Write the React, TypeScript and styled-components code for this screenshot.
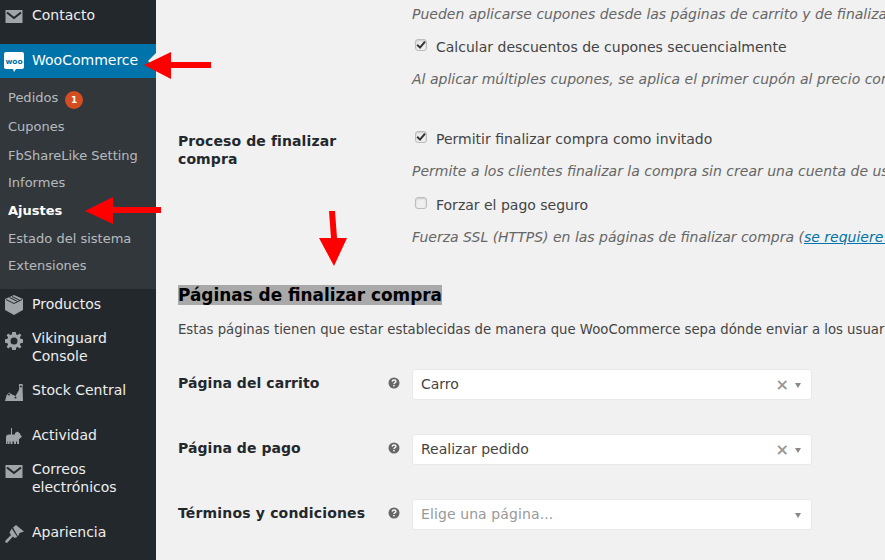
import React from "react";
import styled, { createGlobalStyle } from "styled-components";

const Global = createGlobalStyle`
  html, body { margin: 0; padding: 0; height: 100%; overflow: hidden; background: #f1f1f1; }
  body { font-family: "DejaVu Sans", sans-serif; }
`;

const Page = styled.div`
  position: relative;
  display: flex;
  width: 885px;
  height: 560px;
  overflow: hidden;
`;

const Sidebar = styled.nav`
  flex: 0 0 156px;
  background: #23282d;
  display: flex;
  flex-direction: column;
  margin-top: -2px;
`;

const MenuItem = styled.div<{ $active?: boolean; $gap?: number; $h?: number; $pad?: number }>`
  position: relative;
  display: flex;
  align-items: flex-start;
  height: ${(p) => p.$h ?? 34}px;
  flex: none;
  box-sizing: border-box;
  padding-top: ${(p) => p.$pad ?? 8}px;
  margin-top: ${(p) => p.$gap ?? 0}px;
  background: ${(p) => (p.$active ? "#0073aa" : "transparent")};
  color: ${(p) => (p.$active ? "#fff" : "#eee")};
  font-size: 14px;
  line-height: 18px;
`;

const Notch = styled.span`
  position: absolute;
  right: 0;
  top: 9px;
  width: 0;
  height: 0;
  border: 8px solid transparent;
  border-right-color: #f1f1f1;
`;

const IconSlot = styled.span<{ $dy: number }>`
  flex: 0 0 32px;
  display: flex;
  justify-content: center;
  padding-right: 4px;
  box-sizing: border-box;
  height: 18px;
  svg { display: block; margin-top: ${(p) => p.$dy}px; }
`;

const Submenu = styled.div`
  background: #32373c;
  height: 211px;
  flex: none;
  display: flex;
  flex-direction: column;
  padding: 6px 0 0 8px;
  box-sizing: border-box;
`;

const SubItem = styled.div<{ $current?: boolean; $h: number }>`
  height: ${(p) => p.$h}px;
  flex: none;
  display: flex;
  align-items: center;
  font-size: 13px;
  line-height: 18px;
  white-space: nowrap;
  color: ${(p) => (p.$current ? "#fff" : "rgba(240,245,250,.7)")};
  font-weight: ${(p) => (p.$current ? 700 : 400)};
`;

const Badge = styled.span`
  display: inline-flex;
  align-items: center;
  justify-content: center;
  width: 18px;
  height: 18px;
  border-radius: 50%;
  background: #d54e21;
  color: #fff;
  font-size: 9px;
  font-weight: 700;
  margin: 4px 0 0 7px;
`;

const Main = styled.main`
  flex: 1;
  min-width: 0;
  padding-left: 22px;
  overflow: hidden;
  color: #444;
  font-size: 14px;
  line-height: 20px;
`;

const OptionRow = styled.div<{ $mt: number }>`
  display: flex;
  margin-top: ${(p) => p.$mt}px;
`;

const RowLabel = styled.div`
  flex: 0 0 234px;
  font-weight: 700;
  color: #23282d;
  line-height: 18px;
  margin-top: 3px;
  padding-right: 60px;
  box-sizing: border-box;
  letter-spacing: 0.1px;
`;

const OptionColumn = styled.div<{ $indent?: boolean }>`
  display: flex;
  flex-direction: column;
  min-width: 0;
  flex: 1;
  margin-left: ${(p) => (p.$indent ? 234 : 0)}px;
`;

const Description = styled.p<{ $mt?: number }>`
  margin: ${(p) => p.$mt ?? 0}px 0 0;
  font-style: italic;
  color: #666;
  white-space: nowrap;
  font-size: 14px;
  line-height: 20px;
`;

const CheckLine = styled.div<{ $mt?: number }>`
  display: flex;
  align-items: center;
  height: 20px;
  margin-top: ${(p) => p.$mt ?? 0}px;
  white-space: nowrap;
  color: #444;
`;

const Check = styled.span`
  flex: none;
  width: 10px;
  height: 10px;
  margin: 0 9px 0 3px;
  border: 1px solid #bcbcbc;
  border-radius: 3px;
  background: #efefef;
  box-shadow: inset 0 1px 2px rgba(0,0,0,.15);
  position: relative;
  top: -2px;
  svg { display: block; position: absolute; left: -1px; top: -1px; }
`;

const DocLink = styled.span`
  color: #0073aa;
  text-decoration: underline;
`;

const SectionHeading = styled.h2`
  margin: 38px 0 0;
  font-size: 16.9px;
  line-height: 20px;
  font-weight: 700;
  color: #000;
  white-space: nowrap;
  span { background: #a9a9a9; }
`;

const Intro = styled.p`
  margin: 15px 0 0;
  font-size: 13.26px;
  line-height: 20px;
  color: #444;
  white-space: nowrap;
`;

const FieldRow = styled.div<{ $mt: number }>`
  display: flex;
  align-items: flex-start;
  margin-top: ${(p) => p.$mt}px;
`;

const FieldLabel = styled.div<{ $track: number }>`
  flex: 0 0 208px;
  font-weight: 700;
  color: #23282d;
  line-height: 18px;
  margin-top: 5px;
  white-space: nowrap;
  letter-spacing: ${(p) => p.$track}px;
`;

const Help = styled.span`
  flex: 0 0 26px;
  margin-top: 8px;
  svg { display: block; margin-left: 2px; }
`;

const SelectBox = styled.div`
  width: 400px;
  height: 31px;
  box-sizing: border-box;
  flex: none;
  background: #fff;
  border: 1px solid #e9e9e9;
  border-radius: 3px;
  display: flex;
  align-items: center;
  padding: 0 10px 0 8px;
`;

const SelectValue = styled.span<{ $placeholder?: boolean }>`
  flex: 1;
  color: ${(p) => (p.$placeholder ? "#999" : "#444")};
  position: relative;
  top: -1px;
  letter-spacing: ${(p) => (p.$placeholder ? 0.1 : 0)}px;
`;

const Clear = styled.span`
  font-size: 16px;
  line-height: 16px;
  font-weight: 700;
  color: #999;
  margin-right: 6px;
`;

const Caret = styled.span`
  width: 0;
  height: 0;
  border: 3px solid transparent;
  border-top: 5px solid #888;
  border-bottom: 0;
  position: relative;
  top: 1px;
`;

const ArrowsLayer = styled.svg`
  position: absolute;
  left: 0;
  top: 0;
  pointer-events: none;
`;

const gray = "#a0a5aa";
const dark = "#23282d";

const MailIcon = () => (
  <svg width="18" height="13" viewBox="0 0 18 13">
    <path fill={gray} d="M0.5 0H17.5V13H0.5Z" />
    <path fill="none" stroke={dark} strokeWidth="2" d="M2 2.5L9 8L16 2.5" />
  </svg>
);
const WooIcon = () => (
  <svg width="20" height="20" viewBox="0 0 20 20">
    <path fill="#fff" d="M2 0H18A2 2 0 0 1 20 2V15A2 2 0 0 1 18 17H12L10 20L9 17H2A2 2 0 0 1 0 15V2A2 2 0 0 1 2 0Z" />
    <text x="10" y="11.5" textAnchor="middle" fontFamily="'DejaVu Sans', sans-serif" fontSize="7.5" fontWeight="700" fill="#0073aa">woo</text>
  </svg>
);
const BoxIcon = () => (
  <svg width="18" height="20" viewBox="0 0 18 20">
    <path fill={gray} d="M9 0L18 4V15L9 20L0 15V4Z" />
    <path fill="none" stroke={dark} strokeWidth="1" d="M1 4.5L9 8.5L17 4.5M4.5 2.5L12.5 6.5M7 1.5L15 5.5" />
  </svg>
);
const GearIcon = () => (
  <svg width="18" height="18" viewBox="0 0 18 18">
    <path fill={gray} fillRule="evenodd" d="M7.2 0H10.8L11.2 2.5L12.7 3.1L14.8 1.6L16.4 3.2L14.9 5.3L15.5 6.8L18 7.2V10.8L15.5 11.2L14.9 12.7L16.4 14.8L14.8 16.4L12.7 14.9L11.2 15.5L10.8 18H7.2L6.8 15.5L5.3 14.9L3.2 16.4L1.6 14.8L3.1 12.7L2.5 11.2L0 10.8V7.2L2.5 6.8L3.1 5.3L1.6 3.2L3.2 1.6L5.3 3.1L6.8 2.5ZM9 5.5A3.5 3.5 0 1 0 9 12.5A3.5 3.5 0 1 0 9 5.5Z" />
  </svg>
);
const StockIcon = () => (
  <svg width="18" height="17" viewBox="0 0 18 17">
    <path fill={gray} d="M0 17L1.5 11.5L4 8.5L7 10.5L10.5 12L14 6L14.2 2.5A2 2 0 1 1 17.5 2.5L18 17Z" />
    <circle cx="15.8" cy="2.4" r="1" fill={dark} />
    <circle cx="4" cy="10.5" r="1" fill={dark} />
    <circle cx="10.5" cy="13.5" r="1" fill={dark} />
  </svg>
);
const PawIcon = () => (
  <svg width="16" height="16" viewBox="0 0 16 16">
    <path fill={gray} d="M0 16V9.5C0 7.5 1 6.5 3 6.5H5V0H6V6.5H9V5L11.5 3.5L14 5.5L14.5 7L16 8.5L14 10.5L13 11V16H11V13.5H10V16H8V13.5H6.5V16H4.5V13.5H3.5V16H1.5V13.5H1V16Z" />
  </svg>
);
const BrushIcon = () => (
  <svg width="19" height="18" viewBox="0 0 19 18">
    <path fill={gray} d="M8 2.5L11 0L19 6.5L14.5 8L13 11.5Z" />
    <path fill={gray} d="M6.8 3.5L12.3 12L9.5 13L8 11.5L2.5 17.5C1 18.3 -0.3 17 0.5 15.5L6 10L4.5 7.5Z" />
  </svg>
);
const HelpIcon = () => (
  <svg width="12" height="12" viewBox="0 0 12 12">
    <circle cx="6" cy="6" r="5.5" fill="#666" />
    <path fill="none" stroke="#f1f1f1" strokeWidth="1.5" d="M4.2 4.6C4.3 3.4 5 3 6 3C7.1 3 7.9 3.6 7.9 4.5C7.9 5.7 6 5.6 6 7" />
    <rect x="5.2" y="7.9" width="1.6" height="1.5" fill="#f1f1f1" />
  </svg>
);
const Tick = () => (
  <svg width="12" height="12" viewBox="0 0 12 12">
    <path fill="none" stroke="#333" strokeWidth="2" d="M2.2 5.8L5 8.6L10 2.6" />
  </svg>
);

const menuRest = [
  { label: "Productos", icon: <BoxIcon />, h: 32, pad: 6, dy: 0 },
  { label: <>Vikinguard<br />Console</>, icon: <GearIcon />, h: 52, dy: 3 },
  { label: "Stock Central", icon: <StockIcon />, h: 34, dy: 3 },
  { label: "Actividad", icon: <PawIcon />, h: 34, gap: 11, dy: 2 },
  { label: <>Correos<br />electrónicos</>, icon: <MailIcon />, h: 52, dy: 5 },
  { label: "Apariencia", icon: <BrushIcon />, h: 34, gap: 11, dy: 2 },
];

const subItems: { label: string; h: number; current?: boolean; badge?: boolean }[] = [
  { label: "Pedidos", h: 28, badge: true },
  { label: "Cupones", h: 30 },
  { label: "FbShareLike Setting", h: 27 },
  { label: "Informes", h: 27 },
  { label: "Ajustes", h: 29, current: true },
  { label: "Estado del sistema", h: 27 },
  { label: "Extensiones", h: 27 },
];

const selects = [
  { label: "Página del carrito", value: "Carro", mt: 29, track: 0.06 },
  { label: "Página de pago", value: "Realizar pedido", mt: 34, track: 0.06 },
  { label: "Términos y condiciones", value: "Elige una página...", mt: 34, track: 0.17, empty: true },
];

export default function App() {
  return (
    <Page>
      <Global />
      <Sidebar>
        <MenuItem>
          <IconSlot $dy={4}><MailIcon /></IconSlot>Contacto
        </MenuItem>
        <MenuItem $active $gap={12} $pad={7}>
          <IconSlot $dy={1}><WooIcon /></IconSlot>WooCommerce
          <Notch />
        </MenuItem>
        <Submenu>
          {subItems.map((s) => (
            <SubItem key={s.label} $h={s.h} $current={s.current}>
              {s.label}
              {s.badge && <Badge>1</Badge>}
            </SubItem>
          ))}
        </Submenu>
        {menuRest.map((m, i) => (
          <MenuItem key={i} $h={m.h} $gap={m.gap} $pad={m.pad}>
            <IconSlot $dy={m.dy}>{m.icon}</IconSlot>
            <span>{m.label}</span>
          </MenuItem>
        ))}
      </Sidebar>
      <Main>
        <OptionColumn $indent>
          <Description $mt={4}>Pueden aplicarse cupones desde las páginas de carrito y de finalizar compra.</Description>
          <CheckLine $mt={13}><Check><Tick /></Check>Calcular descuentos de cupones secuencialmente</CheckLine>
          <Description $mt={12}>Al aplicar múltiples cupones, se aplica el primer cupón al precio completo y el segundo al precio con descuento.</Description>
        </OptionColumn>
        <OptionRow $mt={40}>
          <RowLabel>Proceso de finalizar compra</RowLabel>
          <OptionColumn>
            <CheckLine><Check><Tick /></Check>Permitir finalizar compra como invitado</CheckLine>
            <Description $mt={12}>Permite a los clientes finalizar la compra sin crear una cuenta de usuario.</Description>
            <CheckLine $mt={14}><Check />Forzar el pago seguro</CheckLine>
            <Description $mt={12}>Fuerza SSL (HTTPS) en las páginas de finalizar compra (<DocLink>se requiere un certificado SSL</DocLink>).</Description>
          </OptionColumn>
        </OptionRow>
        <SectionHeading><span>Páginas de finalizar compra</span></SectionHeading>
        <Intro>Estas páginas tienen que estar establecidas de manera que WooCommerce sepa dónde enviar a los usuarios para finalizar su compra.</Intro>
        {selects.map((s) => (
          <FieldRow key={s.label} $mt={s.mt}>
            <FieldLabel $track={s.track}>{s.label}</FieldLabel>
            <Help><HelpIcon /></Help>
            <SelectBox>
              <SelectValue $placeholder={s.empty}>{s.value}</SelectValue>
              {!s.empty && <Clear>×</Clear>}
              <Caret />
            </SelectBox>
          </FieldRow>
        ))}
      </Main>
      <ArrowsLayer width="885" height="560" viewBox="0 0 885 560">
        <path fill="#f00" d="M144 65L171 52V62L211 62V68L171 68V79Z" />
        <path fill="#f00" d="M85 211L113 197V207L161 207V213L113 213V224Z" />
        <path fill="#f00" d="M329 211H335L337 238H347L334 266L319 238H331Z" />
      </ArrowsLayer>
    </Page>
  );
}
